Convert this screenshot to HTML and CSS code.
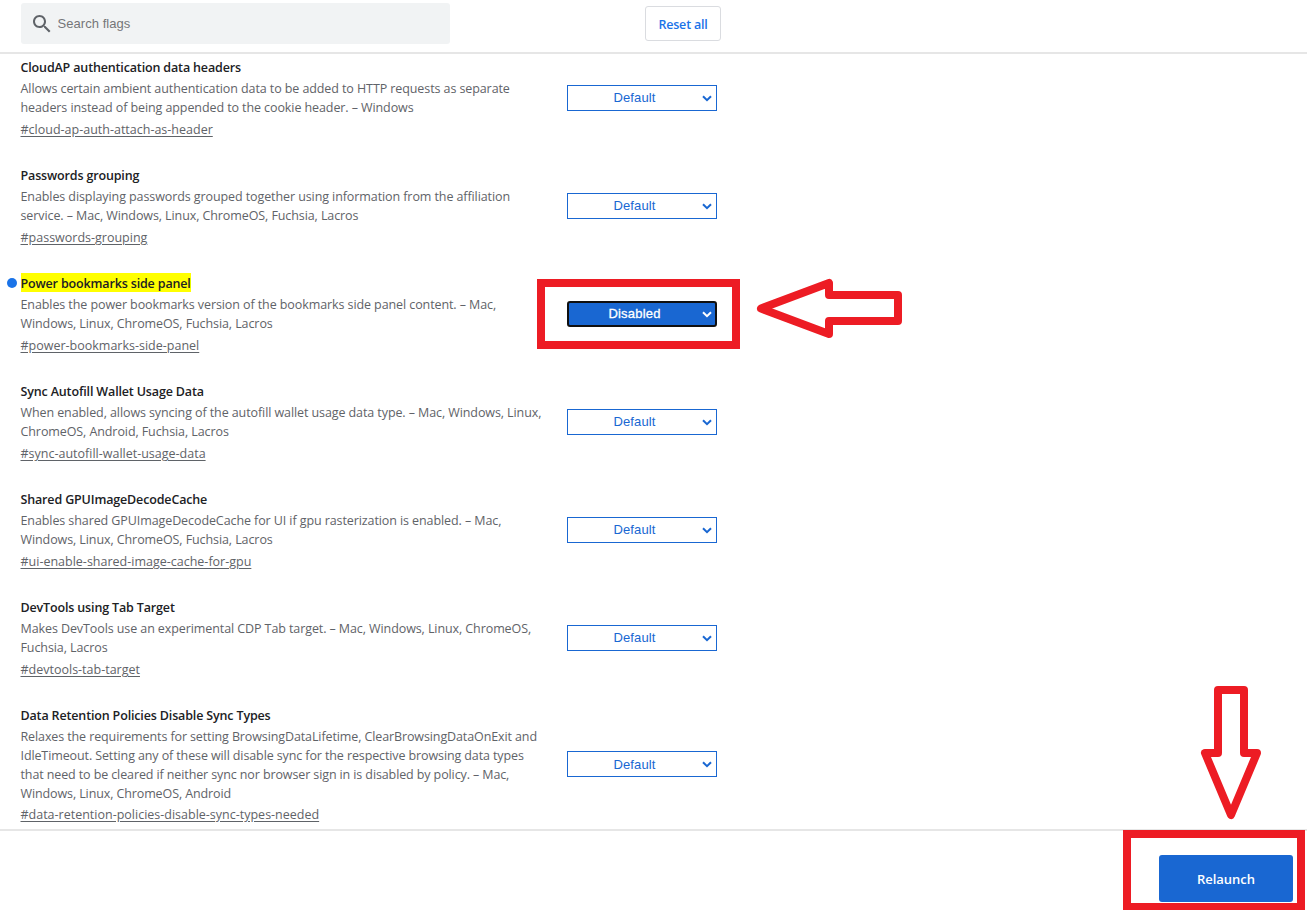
FILE: index.html
```html
<!DOCTYPE html>
<html lang="en">
<head>
    <meta charset="UTF-8">
    <meta name="viewport" content="width=device-width, initial-scale=1.0">
    <title>Experiments</title>
    <link rel="stylesheet" href="styles.css">
</head>
<body>
    <div class="page">
        <header class="header">
            <div class="search">
                <svg class="search-icon" viewBox="0 0 24 24" width="24" height="24"><path fill="#5f6368" d="M15.5 14h-.79l-.28-.27C15.41 12.59 16 11.11 16 9.5 16 5.91 13.09 3 9.5 3S3 5.91 3 9.5 5.91 16 9.5 16c1.61 0 3.09-.59 4.23-1.57l.27.28v.79l5 4.99L20.49 19l-4.99-5zm-6 0C7.01 14 5 11.99 5 9.5S7.01 5 9.5 5 14 7.01 14 9.5 11.99 14 9.5 14z"/></svg>
                <input class="search-input" type="text" placeholder="Search flags">
            </div>
            <button class="reset">Reset all</button>
        </header>

        <main class="flags">
            <section class="flag">
                <div class="flag-text">
                    <h3><span>CloudAP authentication data headers</span></h3>
                    <p>Allows certain ambient authentication data to be added to HTTP requests as separate<br>headers instead of being appended to the cookie header. – Windows</p>
                    <a href="#cloud-ap-auth-attach-as-header">#cloud-ap-auth-attach-as-header</a>
                </div>
                <div class="select-wrap">
                    <select><option>Default</option></select>
                    <svg class="chevron" viewBox="0 0 10 7" width="10" height="7"><path d="M1 1.2l4 4 4-4"/></svg>
                </div>
            </section>

            <section class="flag">
                <div class="flag-text">
                    <h3><span>Passwords grouping</span></h3>
                    <p>Enables displaying passwords grouped together using information from the affiliation<br>service. – Mac, Windows, Linux, ChromeOS, Fuchsia, Lacros</p>
                    <a href="#passwords-grouping">#passwords-grouping</a>
                </div>
                <div class="select-wrap">
                    <select><option>Default</option></select>
                    <svg class="chevron" viewBox="0 0 10 7" width="10" height="7"><path d="M1 1.2l4 4 4-4"/></svg>
                </div>
            </section>

            <section class="flag changed">
                <div class="flag-text">
                    <h3><span>Power bookmarks side panel</span></h3>
                    <p>Enables the power bookmarks version of the bookmarks side panel content. – Mac,<br>Windows, Linux, ChromeOS, Fuchsia, Lacros</p>
                    <a href="#power-bookmarks-side-panel">#power-bookmarks-side-panel</a>
                </div>
                <div class="select-wrap">
                    <select><option>Disabled</option></select>
                    <svg class="chevron" viewBox="0 0 10 7" width="10" height="7"><path d="M1 1.2l4 4 4-4"/></svg>
                </div>
            </section>

            <section class="flag">
                <div class="flag-text">
                    <h3><span>Sync Autofill Wallet Usage Data</span></h3>
                    <p>When enabled, allows syncing of the autofill wallet usage data type. – Mac, Windows, Linux,<br>ChromeOS, Android, Fuchsia, Lacros</p>
                    <a href="#sync-autofill-wallet-usage-data">#sync-autofill-wallet-usage-data</a>
                </div>
                <div class="select-wrap">
                    <select><option>Default</option></select>
                    <svg class="chevron" viewBox="0 0 10 7" width="10" height="7"><path d="M1 1.2l4 4 4-4"/></svg>
                </div>
            </section>

            <section class="flag">
                <div class="flag-text">
                    <h3><span>Shared GPUImageDecodeCache</span></h3>
                    <p>Enables shared GPUImageDecodeCache for UI if gpu rasterization is enabled. – Mac,<br>Windows, Linux, ChromeOS, Fuchsia, Lacros</p>
                    <a href="#ui-enable-shared-image-cache-for-gpu">#ui-enable-shared-image-cache-for-gpu</a>
                </div>
                <div class="select-wrap">
                    <select><option>Default</option></select>
                    <svg class="chevron" viewBox="0 0 10 7" width="10" height="7"><path d="M1 1.2l4 4 4-4"/></svg>
                </div>
            </section>

            <section class="flag">
                <div class="flag-text">
                    <h3><span>DevTools using Tab Target</span></h3>
                    <p>Makes DevTools use an experimental CDP Tab target. – Mac, Windows, Linux, ChromeOS,<br>Fuchsia, Lacros</p>
                    <a href="#devtools-tab-target">#devtools-tab-target</a>
                </div>
                <div class="select-wrap">
                    <select><option>Default</option></select>
                    <svg class="chevron" viewBox="0 0 10 7" width="10" height="7"><path d="M1 1.2l4 4 4-4"/></svg>
                </div>
            </section>

            <section class="flag long">
                <div class="flag-text">
                    <h3><span>Data Retention Policies Disable Sync Types</span></h3>
                    <p>Relaxes the requirements for setting BrowsingDataLifetime, ClearBrowsingDataOnExit and<br>IdleTimeout. Setting any of these will disable sync for the respective browsing data types<br>that need to be cleared if neither sync nor browser sign in is disabled by policy. – Mac,<br>Windows, Linux, ChromeOS, Android</p>
                    <a href="#data-retention-policies-disable-sync-types-needed">#data-retention-policies-disable-sync-types-needed</a>
                </div>
                <div class="select-wrap">
                    <select><option>Default</option></select>
                    <svg class="chevron" viewBox="0 0 10 7" width="10" height="7"><path d="M1 1.2l4 4 4-4"/></svg>
                </div>
            </section>
        </main>

        <footer class="footer">
            <button class="relaunch">Relaunch</button>
        </footer>

        <!-- red markup over the page -->
        <svg class="marks" viewBox="0 0 1307 910" width="1307" height="910">
            <rect x="541" y="283" width="195" height="62"/>
            <path d="M761 308.5L829 283V295H898V321H829V334Z"/>
            <rect x="1127" y="834" width="174" height="73"/>
            <path d="M1218 690H1244V753H1257L1231 815L1205 753H1218Z"/>
        </svg>
    </div>
</body>
</html>
```
FILE: styles.css
```css
* {
    box-sizing: border-box;
}
body {
    margin: 0;
    background: #fff;
    color: #202124;
    font-family: "Open Sans", "Noto Sans", sans-serif;
    font-size: 12.5px;
    overflow: hidden;
}
.page {
    position: relative;
    display: flex;
    flex-direction: column;
    width: 1307px;
    height: 910px;
}
.header {
    display: flex;
    align-items: flex-start;
    justify-content: space-between;
    height: 52px;
    width: 721px;
    padding: 3px 0 0 21px;
    flex: none;
}
.search {
    display: flex;
    align-items: center;
    width: 429px;
    height: 41px;
    padding-left: 9px;
    background: #f1f3f4;
    border-radius: 3px;
}
.search-icon {
    flex: none;
}
.search-input {
    flex: 1;
    border: none;
    background: none;
    padding: 0 0 0 3.5px;
    font: 13px "Liberation Sans", Arial, sans-serif;
    letter-spacing: 0.05px;
    outline: none;
}
.search-input::placeholder {
    color: #757679;
}
.reset {
    width: 76px;
    height: 35px;
    margin-top: 3px;
    padding: 2px 0 0;
    background: #fff;
    border: 1px solid #dadce0;
    border-radius: 3px;
    color: #1a73e8;
    font: 600 12.5px "Open Sans", sans-serif;
    letter-spacing: -0.2px;
}
.flags {
    flex: 1;
    border-top: 2px solid #e6e6e6;
    padding: 4px 0 0 20.5px;
}
.flag {
    position: relative;
    display: flex;
    align-items: center;
    width: 696.5px;
    height: 81px;
    margin-bottom: 27px;
}
.flag.long {
    height: 118px;
    margin-bottom: 0;
}
.flag-text {
    flex: 1;
    align-self: flex-start;
    white-space: nowrap;
    line-height: 19px;
}
.flag h3 {
    height: 19px;
    margin: 0 0 2px;
    font-size: 12.5px;
    font-weight: 600;
    letter-spacing: -0.15px;
}
.flag p {
    margin: 0 0 3px;
    color: #5f6368;
    letter-spacing: -0.09px;
}
.flag.long p {
    margin-bottom: 2px;
    letter-spacing: -0.11px;
}
.flag a {
    display: block;
    width: fit-content;
    color: #5f6368;
    text-underline-offset: 2px;
}
.changed h3 span {
    display: inline-block;
    vertical-align: top;
    margin-top: -1px;
    padding-top: 2px;
    line-height: 17px;
    background: #ff0;
}
.changed::before {
    content: "";
    position: absolute;
    left: -14px;
    top: 4px;
    width: 10px;
    height: 10px;
    border-radius: 50%;
    background: #1a73e8;
}
.select-wrap {
    position: relative;
    width: 150px;
    height: 26px;
    margin-bottom: 2px;
    flex: none;
    color: #1967d2;
}
.select-wrap select {
    display: block;
    appearance: none;
    width: 150px;
    height: 26px;
    padding: 0 15px 0 0;
    background: #fff;
    border: 1px solid #1967d2;
    border-radius: 0;
    color: inherit;
    font: 13px "Liberation Sans", Arial, sans-serif;
    letter-spacing: 0.15px;
    text-align: center;
    text-align-last: center;
}
.chevron {
    position: absolute;
    right: 5px;
    top: 10px;
    fill: none;
    stroke: currentColor;
    stroke-width: 2;
}
.changed .select-wrap {
    color: #fff;
}
.changed select {
    background: #1967d2;
    border: 2px solid #101010;
    border-radius: 3px;
    letter-spacing: 0.2px;
    -webkit-text-stroke: 0.3px #fff;
}
.footer {
    display: flex;
    flex: none;
    align-items: flex-start;
    justify-content: flex-end;
    height: 81px;
    padding: 24px 14px 0 0;
    border-top: 2px solid #e6e6e6;
    background: #fff;
}
.relaunch {
    width: 134px;
    height: 47px;
    padding: 0;
    border: none;
    border-radius: 3px;
    background: #1967d2;
    color: #fff;
    font: 600 13px "Open Sans", sans-serif;
}
.marks {
    position: absolute;
    left: 0;
    top: 0;
    pointer-events: none;
    fill: none;
    stroke: #ed1c24;
    stroke-width: 8;
}
.marks path {
    stroke-linejoin: round;
}
```
